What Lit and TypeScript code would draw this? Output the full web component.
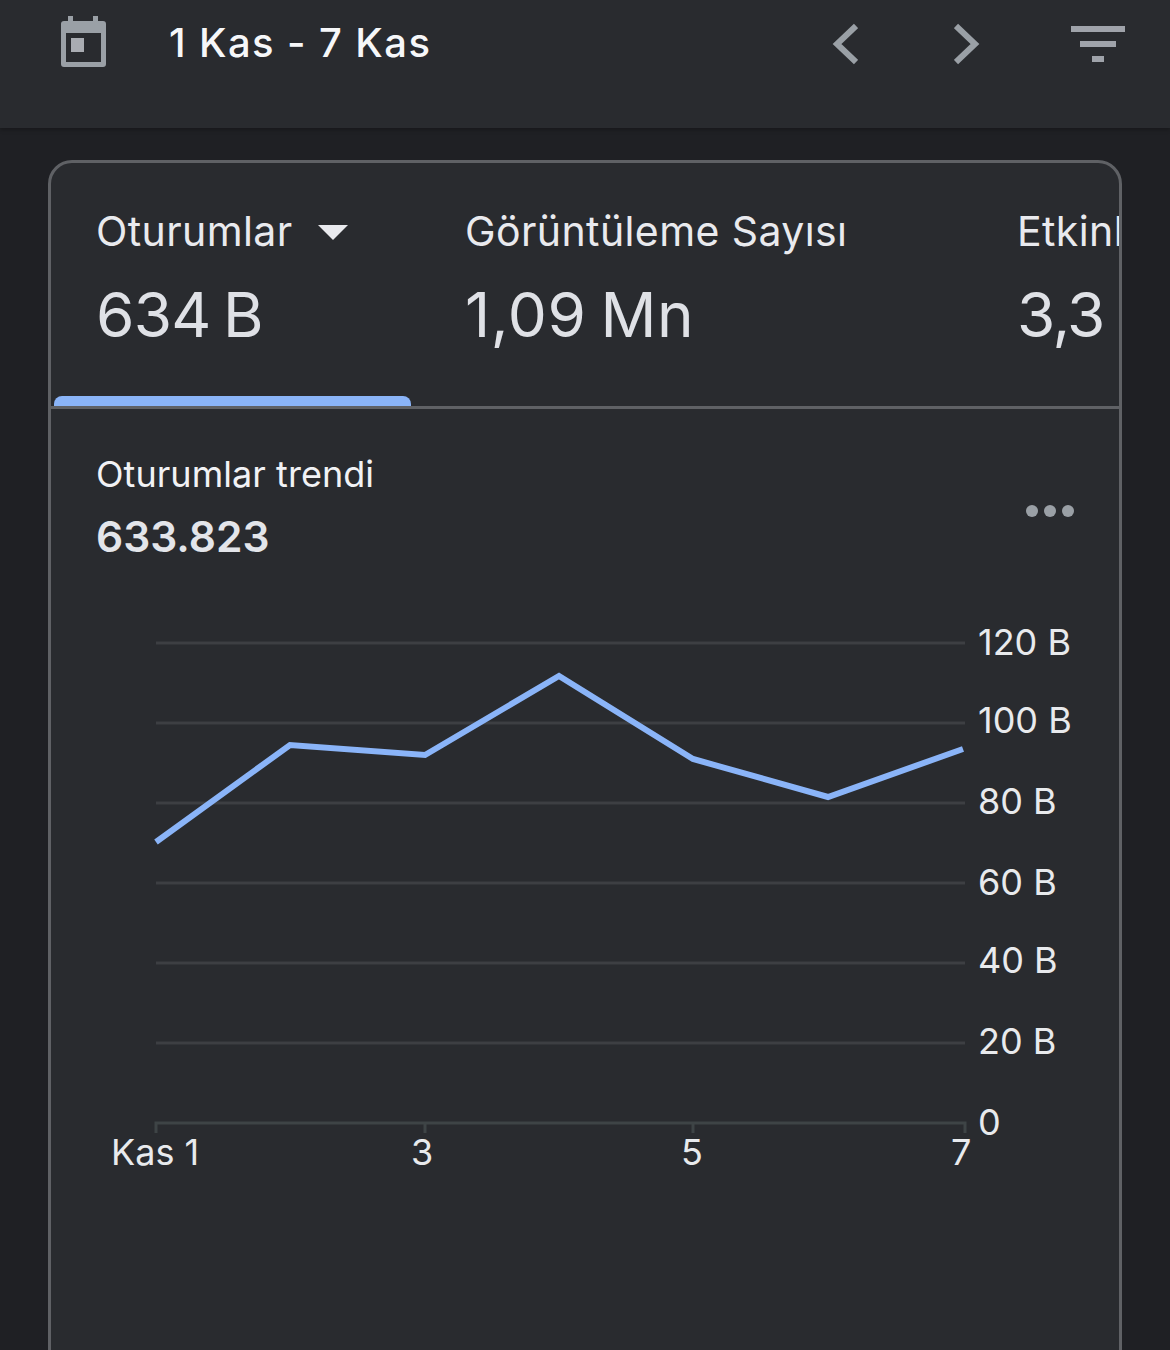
import { LitElement, html, css, svg } from "lit";
import { customElement } from "lit/decorators.js";

const pts = [[156,842],[290,745],[425,755],[559,676],[693,759],[828,797],[963,749]];
const grid = [643,723,803,883,963,1043];
const yl: [number,string][] = [[655,"120 B"],[733,"100 B"],[814,"80 B"],[895,"60 B"],[973,"40 B"],[1054,"20 B"],[1135,"0"]];
const OX = 51, OY = 580;

@customElement("app-root")
export class AppRoot extends LitElement {
  static styles = css`
    :host { display: block; width: 1170px; height: 1350px; overflow: hidden; background: #1f2024; font-family: Inter, "Liberation Sans", sans-serif; color: #fff; }
    .top { height: 128px; box-sizing: border-box; background: #292b2f; display: flex; align-items: flex-start; padding: 14px 0 0 59px; box-shadow: 0 2px 4px rgba(0,0,0,.25); position: relative; }
    .cal { width: 48px; height: 54px; display: block; flex: none; }
    .date { margin-left: 62px; margin-top: 5px; font-size: 40px; line-height: 48px; font-weight: 500; letter-spacing: 1.4px; color: #f6f7f9; flex: 1; white-space: nowrap; }
    .prev { margin: 9px 0 0 0; display: block; }
    .next { margin: 9px 0 0 96px; display: block; }
    .filter { margin: 12px 45px 0 91px; display: block; }
    .card { margin: 32px 48px 0; height: 1300px; box-sizing: border-box; background: #292b2f; border: 3px solid #5f6165; border-radius: 24px; overflow: hidden; }
    .tabs { display: flex; height: 246px; box-sizing: border-box; border-bottom: 3px solid #5f6165; overflow: hidden; }
    .tab { flex: none; box-sizing: border-box; padding: 46px 0 0 45px; position: relative; white-space: nowrap; }
    .t1 { width: 361px; }
    .t2 { width: 552px; padding-left: 53px; }
    .t3 { padding-left: 53px; }
    .lab { font-size: 41px; line-height: 44px; color: #e9eaee; display: flex; align-items: center; gap: 25px; letter-spacing: 0.4px; }
    .caret { width: 0; height: 0; border-left: 15px solid transparent; border-right: 15px solid transparent; border-top: 15px solid #e9eaee; margin-top: 3px; }
    .val { font-size: 62px; line-height: 72px; margin-top: 26px; color: #dfe1e6; font-weight: 400; letter-spacing: -0.8px; word-spacing: -4px; }
    .wide { letter-spacing: 0.6px; }
    .tight { letter-spacing: -1.5px; }
    .bar { position: absolute; left: 3px; bottom: 0; width: 357px; height: 10px; background: #8ab4f8; border-radius: 8px 8px 0 0; }
    .head { display: flex; justify-content: space-between; padding: 45px 45px 0 45px; }
    .title { font-size: 36px; line-height: 40px; letter-spacing: 0.05px; color: #f1f2f5; }
    .num { font-size: 42.5px; line-height: 52px; font-weight: 600; color: #e3e5ea; margin-top: 17px; }
    .dots { display: flex; gap: 6px; margin-top: 51px; }
    .dot { width: 12px; height: 12px; border-radius: 50%; background: #9aa0a6; }
    .chart { display: block; margin-top: 17px; }
    text { font-family: Inter, "Liberation Sans", sans-serif; font-size: 36px; fill: #e8eaed; }
  `;
  render() {
    const line = pts.map(p => `${p[0]-OX},${p[1]-OY}`).join(" ");
    return html`
      <div class="top">
        <svg class="cal" viewBox="0 0 48 54"><path fill="#9aa0a6" fill-rule="evenodd" d="M9 2h5v5h20V2h5v5h5a3 3 0 0 1 3 3v40a3 3 0 0 1-3 3H5a3 3 0 0 1-3-3V10a3 3 0 0 1 3-3h4zM7 19v29h35V19z"/><rect x="12" y="24" width="13" height="14" fill="#a9acb2"/></svg>
        <div class="date">1 Kas - 7 Kas</div>
        <svg class="prev" width="26" height="42" viewBox="0 0 26 42"><path d="M24 3 5 21l19 18" fill="none" stroke="#9aa0a6" stroke-width="6"/></svg>
        <svg class="next" width="26" height="42" viewBox="0 0 26 42"><path d="M2 3l19 18L2 39" fill="none" stroke="#9aa0a6" stroke-width="6"/></svg>
        <svg class="filter" width="54" height="36" viewBox="0 0 54 36"><path fill="#9fa3aa" d="M0 0h54v6H0zM9 15h36v6H9zM21 30h12v6H21z"/></svg>
      </div>
      <div class="card">
        <div class="tabs">
          <div class="tab t1"><div class="lab">Oturumlar <span class="caret"></span></div><div class="val">634 B</div><div class="bar"></div></div>
          <div class="tab t2"><div class="lab">Görüntüleme Sayısı</div><div class="val wide">1,09 Mn</div></div>
          <div class="tab t3"><div class="lab">Etkinlik Sayısı</div><div class="val tight">3,3 Mn</div></div>
        </div>
        <div class="head">
          <div><div class="title">Oturumlar trendi</div><div class="num">633.823</div></div>
          <div class="dots"><span class="dot"></span><span class="dot"></span><span class="dot"></span></div>
        </div>
        <svg class="chart" width="1068" height="620" viewBox="0 0 1068 620">
          ${grid.map(y => svg`<line x1=${156-OX} x2=${965-OX} y1=${y-OY} y2=${y-OY} stroke="#3d3f43" stroke-width="3"/>`)}
          <path d="M${156-OX} ${1133-OY}V${1123-OY}H${965-OX}V${1133-OY}M${425-OX} ${1123-OY}v10M${693-OX} ${1123-OY}v10" fill="none" stroke="#3e4446" stroke-width="3"/>
          <polyline points=${line} fill="none" stroke="#8ab4f8" stroke-width="6"/>
          ${yl.map(([y,t]) => svg`<text x=${978-OX} y=${y-OY}>${t}</text>`)}
          <text x=${111-OX} y=${1165-OY}>Kas 1</text>
          <text x=${411-OX} y=${1165-OY}>3</text>
          <text x=${681-OX} y=${1165-OY}>5</text>
          <text x=${951-OX} y=${1165-OY}>7</text>
        </svg>
      </div>`;
  }
}
